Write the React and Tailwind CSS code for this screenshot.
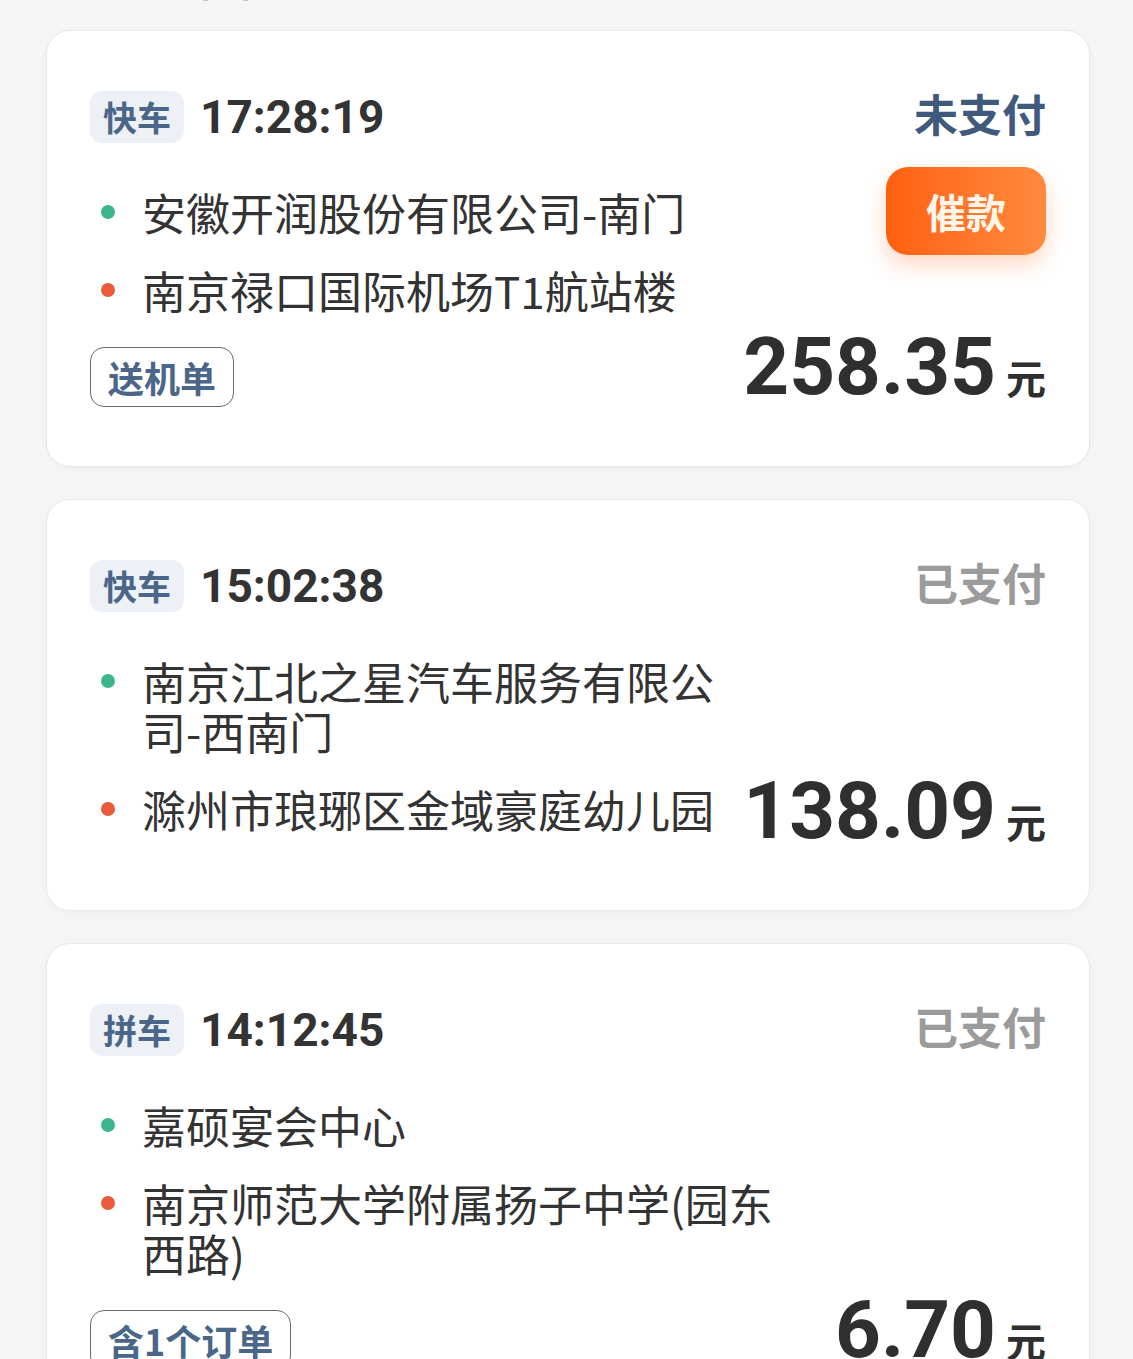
const cjk = "font-['Noto_Sans_CJK_SC',sans-serif]";
const num = "font-['Roboto','Noto_Sans_CJK_SC',sans-serif]";

const orders = [
  {
    kind: "快车",
    time: "17:28:19",
    status: "未支付",
    paid: false,
    from: "安徽开润股份有限公司-南门",
    to: "南京禄口国际机场T1航站楼",
    tag: "送机单",
    price: "258.35",
  },
  {
    kind: "快车",
    time: "15:02:38",
    status: "已支付",
    paid: true,
    from: "南京江北之星汽车服务有限公司-西南门",
    to: "滁州市琅琊区金域豪庭幼儿园",
    price: "138.09",
  },
  {
    kind: "拼车",
    time: "14:12:45",
    status: "已支付",
    paid: true,
    from: "嘉硕宴会中心",
    to: "南京师范大学附属扬子中学(园东西路)",
    tag: "含1个订单",
    price: "6.70",
  },
];

function AddressRow({ color, text }) {
  return (
    <div className="flex items-start">
      <div className="w-[52px] shrink-0 pt-[18px] pl-[11px]">
        <div className={`w-[14px] h-[14px] rounded-full ${color}`} />
      </div>
      <div className="text-[44px] leading-[50px] text-[#333333]">{text}</div>
    </div>
  );
}

function OrderCard({ order }) {
  return (
    <div className="flex gap-[28px] rounded-[24px] border border-[#e9e9e9] bg-white pl-[43px] pr-[43px] pt-[60px] pb-[59px] shadow-[0_2px_6px_rgba(0,0,0,0.03)]">
      <div className="flex-1 min-w-0 flex flex-col">
        <div className="flex items-center gap-[16px]">
          <span className="h-[52px] px-[13px] rounded-[12px] bg-[#edf1f6] text-[34px] leading-[52px] font-bold text-[#4a6688]">
            {order.kind}
          </span>
          <span className={`${num} text-[46px] leading-[52px] font-bold text-[#333333]`}>
            {order.time}
          </span>
        </div>
        <div className="mt-[44px] mb-[17px] flex flex-col gap-[28px]">
          <AddressRow color="bg-[#3db58e]" text={order.from} />
          <AddressRow color="bg-[#e85a3a]" text={order.to} />
        </div>
        {order.tag && (
          <span className="mt-[15px] self-start h-[60px] px-[17px] rounded-[14px] border border-[#6b6b6b] text-[36px] leading-[58px] font-bold text-[#4a6688]">
            {order.tag}
          </span>
        )}
      </div>
      <div className="shrink-0 flex flex-col items-end justify-between">
        <div className="flex flex-col items-end">
          <span
            className={`text-[44px] leading-[44px] font-bold ${
              order.paid ? "text-[#9b9b9b]" : "text-[#3f5a7c]"
            }`}
          >
            {order.status}
          </span>
          {!order.paid && (
            <button className="mt-[32px] w-[160px] h-[88px] rounded-[22px] bg-linear-to-r from-[#ff5f0c] to-[#ff8a3d] text-[40px] font-bold text-[#fff6ea] shadow-[0_10px_22px_rgba(255,110,40,0.28)]">
              催款
            </button>
          )}
        </div>
        <div className="flex items-baseline text-[#2f2f2f]">
          <span className={`${num} text-[80px] leading-none font-bold`}>{order.price}</span>
          <span className="ml-[10px] text-[40px] leading-none font-bold">元</span>
        </div>
      </div>
    </div>
  );
}

export default function App() {
  return (
    <div className={`${cjk} min-h-screen bg-[#f5f5f5] pl-[46px] pr-[43px]`}>
      <div className="h-[30px] overflow-hidden flex flex-col justify-end">
        <div className="mb-[31px] pl-[70px] text-[40px] leading-[40px] font-bold text-[#333333]">
          近期行程
        </div>
      </div>
      <div className="flex flex-col gap-[32px]">
        {orders.map((o, i) => (
          <OrderCard key={i} order={o} />
        ))}
      </div>
    </div>
  );
}
